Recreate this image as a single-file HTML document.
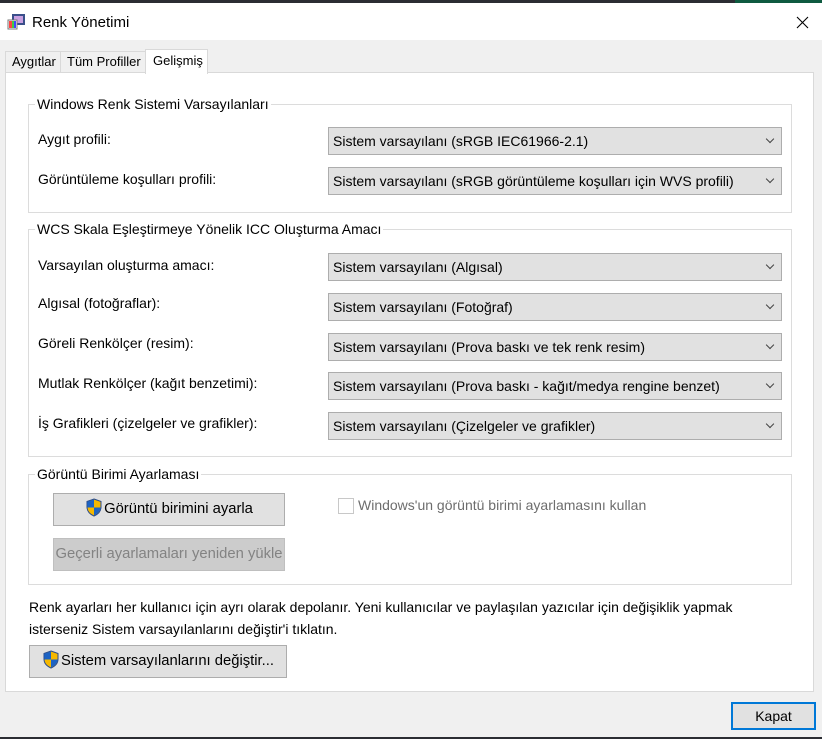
<!DOCTYPE html>
<html><head><meta charset="utf-8"><style>
*{margin:0;padding:0;box-sizing:border-box}
body{width:822px;height:739px;background:#f0f0f0;position:relative;overflow:hidden;font-family:"Liberation Sans",sans-serif;font-size:14px;color:#000}
.a{position:absolute;white-space:nowrap}
.t{line-height:18px;transform:translateY(-9px)}
.grp{position:absolute;border:1px solid #dcdcdc}
.gl{position:absolute;background:#fff;padding:0 2px;line-height:18px;top:-10px;left:6px}
.cb{position:absolute;left:328px;width:454px;height:28px;background:#e1e1e1;border:1px solid #adadad;line-height:27px;padding-left:4px}
.cb:after{content:"";position:absolute;right:8px;top:8px;width:5px;height:5px;border-right:1px solid #444;border-bottom:1px solid #444;transform:rotate(45deg)}
.btn{position:absolute;background:#e1e1e1;border:1px solid #adadad;text-align:center;line-height:31px;font-size:14.8px;white-space:nowrap}
.sh{display:inline-block;vertical-align:middle;margin-right:1px;margin-top:-3px}
</style></head><body>
<div class="a" style="left:0;top:0;width:822px;height:3px;background:#2b2d33"></div>
<div class="a" style="left:735px;top:0;width:87px;height:3px;background:#0e5a40"></div>
<div class="a" style="left:0;top:3px;width:822px;height:37px;background:#fff"></div>
<svg class="a" style="left:7px;top:13px" width="19" height="17" viewBox="0 0 19 17"><rect x="5" y="1" width="13" height="11" fill="#3a4f8a"/><rect x="7" y="3" width="9" height="7" fill="#c9a0e0"/><rect x="1" y="7" width="9" height="9" fill="#fff" stroke="#777"/><rect x="2" y="8" width="3" height="7" fill="#f44"/><rect x="5" y="8" width="2" height="7" fill="#4c4"/><rect x="7" y="8" width="2" height="7" fill="#44f"/></svg>
<div class="a t" style="left:32px;top:23px;font-size:15px">Renk Yönetimi</div>
<svg class="a" style="left:796px;top:16px" width="13" height="13"><path d="M1 1L12 12M12 1L1 12" stroke="#000" stroke-width="1.1"/></svg>

<div class="a" style="left:5px;top:51px;width:56px;height:22px;border:1px solid #d9d9d9;border-bottom:none;background:#f0f0f0"></div>
<div class="a t" style="left:12px;top:62px;font-size:13px">Aygıtlar</div>
<div class="a" style="left:60px;top:51px;width:86px;height:22px;border:1px solid #d9d9d9;border-bottom:none;background:#f0f0f0"></div>
<div class="a t" style="left:67px;top:62px;font-size:13px">Tüm Profiller</div>
<div class="a" style="left:5px;top:72px;width:809px;height:620px;background:#fff;border:1px solid #d9d9d9"></div>
<div class="a" style="left:145px;top:49px;width:63px;height:25px;border:1px solid #d9d9d9;border-bottom:none;background:#fff"></div>
<div class="a t" style="left:153px;top:61px;font-size:13px">Gelişmiş</div>

<div class="grp" style="left:28px;top:104px;width:764px;height:109px"><div class="gl" style="left:6px">Windows Renk Sistemi Varsayılanları</div></div>
<div class="a t" style="left:38px;top:139px">Aygıt profili:</div>
<div class="cb" style="top:127px">Sistem varsayılanı (sRGB IEC61966-2.1)</div>
<div class="a t" style="left:38px;top:179px">Görüntüleme koşulları profili:</div>
<div class="cb" style="top:167px">Sistem varsayılanı (sRGB görüntüleme koşulları için WVS profili)</div>

<div class="grp" style="left:28px;top:229px;width:764px;height:228px"><div class="gl">WCS Skala Eşleştirmeye Yönelik ICC Oluşturma Amacı</div></div>
<div class="a t" style="left:38px;top:265px">Varsayılan oluşturma amacı:</div>
<div class="cb" style="top:253px">Sistem varsayılanı (Algısal)</div>
<div class="a t" style="left:38px;top:303px">Algısal (fotoğraflar):</div>
<div class="cb" style="top:293px">Sistem varsayılanı (Fotoğraf)</div>
<div class="a t" style="left:38px;top:343px">Göreli Renkölçer (resim):</div>
<div class="cb" style="top:333px">Sistem varsayılanı (Prova baskı ve tek renk resim)</div>
<div class="a t" style="left:38px;top:383px">Mutlak Renkölçer (kağıt benzetimi):</div>
<div class="cb" style="top:372px">Sistem varsayılanı (Prova baskı - kağıt/medya rengine benzet)</div>
<div class="a t" style="left:38px;top:423px">İş Grafikleri (çizelgeler ve grafikler):</div>
<div class="cb" style="top:412px">Sistem varsayılanı (Çizelgeler ve grafikler)</div>

<div class="grp" style="left:28px;top:474px;width:764px;height:111px"><div class="gl">Görüntü Birimi Ayarlaması</div></div>
<div class="btn" style="left:53px;top:493px;width:232px;height:33px"><svg class="sh" width="18" height="19" viewBox="0 0 18 19"><path d="M9 1L16 3.5V9C16 13.5 12.5 16.5 9 18C5.5 16.5 2 13.5 2 9V3.5Z" fill="#f5b800" stroke="#2b4c8c"/><path d="M9 1.5V9.5H2.3V3.8ZM9 9.5H15.8C15.4 13.2 12.4 16 9 17.4Z" fill="#1d63c4"/></svg>Görüntü birimini ayarla</div>
<div class="btn" style="left:53px;top:538px;width:232px;height:33px;background:#cccccc;border-color:#bfbfbf;color:#838383">Geçerli ayarlamaları yeniden yükle</div>
<div class="a" style="left:338px;top:498px;width:16px;height:16px;border:1px solid #c8c8c8;background:#fff"></div>
<div class="a t" style="left:358px;top:505px;color:#6d6d6d">Windows'un görüntü birimi ayarlamasını kullan</div>

<div class="a t" style="left:29px;top:607px">Renk ayarları her kullanıcı için ayrı olarak depolanır. Yeni kullanıcılar ve paylaşılan yazıcılar için değişiklik yapmak</div>
<div class="a t" style="left:29px;top:629px">isterseniz Sistem varsayılanlarını değiştir'i tıklatın.</div>
<div class="btn" style="left:29px;top:645px;width:258px;height:33px"><svg class="sh" width="18" height="19" viewBox="0 0 18 19"><path d="M9 1L16 3.5V9C16 13.5 12.5 16.5 9 18C5.5 16.5 2 13.5 2 9V3.5Z" fill="#f5b800" stroke="#2b4c8c"/><path d="M9 1.5V9.5H2.3V3.8ZM9 9.5H15.8C15.4 13.2 12.4 16 9 17.4Z" fill="#1d63c4"/></svg>Sistem varsayılanlarını değiştir...</div>

<div class="btn" style="left:731px;top:702px;width:85px;height:28px;border:2px solid #0078d7;line-height:24px;font-size:14px">Kapat</div>
<div class="a" style="left:0;top:737px;width:822px;height:2px;background:#2b2d33"></div>
</body></html>
